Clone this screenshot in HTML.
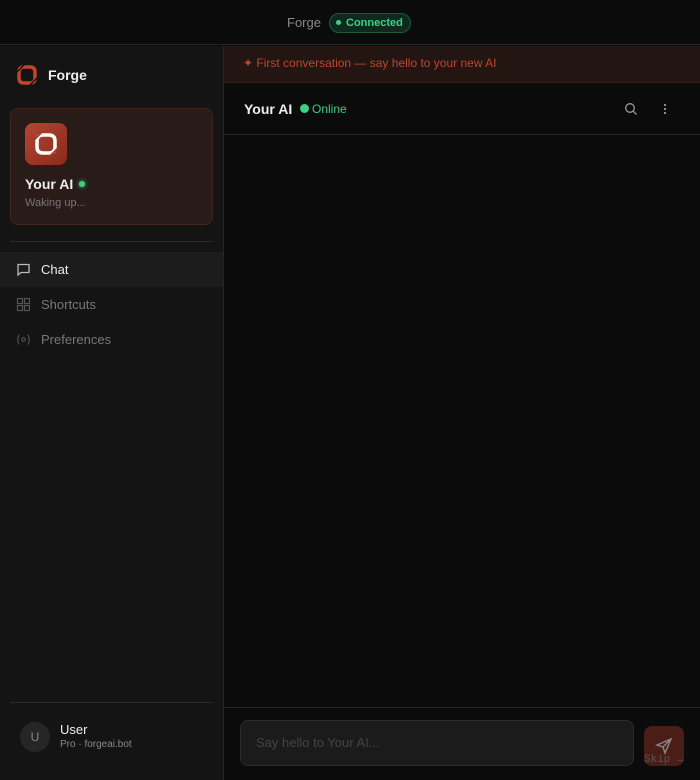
<!DOCTYPE html>
<html><head><style>
*{box-sizing:border-box;margin:0;padding:0}
body{width:700px;height:780px;background:#0b0b0b;font-family:"Liberation Sans",sans-serif;position:relative;overflow:hidden;color:#eee}
.top{position:absolute;left:0;top:0;width:700px;height:45px;background:#0b0b0b;border-bottom:1px solid #262626}
.side{position:absolute;left:0;top:46px;width:224px;height:734px;background:#141414;border-right:1px solid #262626}
.abs{position:absolute}
</style></head><body>
<div class="top">
 <span class="abs" style="left:287px;top:15px;font-size:13px;color:#8a8a8a">Forge</span>
 <div class="abs" style="left:329px;top:13px;width:82px;height:20px;border-radius:10px;background:#0f2a1c;border:1px solid #1d5a3a;font-size:11px;color:#3ecf85;line-height:18px;padding-left:16px;font-weight:bold">Connected<span class="abs" style="left:6px;top:6px;width:5px;height:5px;border-radius:50%;background:#3ecf85"></span></div>
</div>
<div class="side">
 <svg class="abs" style="left:16px;top:18px" width="22" height="22" viewBox="0 0 22 22"><path d="M3 8 Q3 3 8 3 L14 3 Q19 3 19 8 L19 14 Q19 19 14 19 L8 19 Q3 19 3 14Z" fill="none" stroke="#c2452c" stroke-width="3.5"/><path d="M9 0 L0 9 M13 22 L22 13" stroke="#141414" stroke-width="1.5"/></svg>
 <span class="abs" style="left:48px;top:21px;font-size:14px;font-weight:bold;color:#eee">Forge</span>
 <div class="abs" style="left:10px;top:62px;width:203px;height:117px;border-radius:8px;background:#281b18;border:1px solid #42241d"></div>
 <div class="abs" style="left:25px;top:77px;width:42px;height:42px;border-radius:8px;background:linear-gradient(135deg,#b44532,#8a2a1c)"></div>
 <svg class="abs" style="left:33px;top:85px" width="26" height="26" viewBox="0 0 26 26"><path d="M4 10 Q4 4 10 4 L16 4 Q22 4 22 10 L22 16 Q22 22 16 22 L10 22 Q4 22 4 16Z" fill="none" stroke="#fff" stroke-width="3.5"/><path d="M10 0 L0 10 M16 26 L26 16" stroke="#a33a28" stroke-width="1.8"/></svg>
 <span class="abs" style="left:25px;top:130px;font-size:14px;font-weight:bold;color:#eee">Your AI</span>
 <span class="abs" style="left:79px;top:135px;width:6px;height:6px;border-radius:50%;background:#3ecf85;box-shadow:0 0 4px #3ecf85"></span>
 <span class="abs" style="left:25px;top:151px;font-size:11px;color:#777">Waking up...</span>
 <div class="abs" style="left:10px;top:195px;width:203px;height:1px;background:#2a2a2a"></div>
 <div class="abs" style="left:0;top:206px;width:223px;height:35px;background:#1c1c1c"></div>
 <svg class="abs" style="left:16px;top:216px" width="15" height="15" viewBox="0 0 15 15" fill="none" stroke="#bbb" stroke-width="1.3"><path d="M2 2.5h11v8H5l-3 2.5z"/></svg>
 <span class="abs" style="left:41px;top:216px;font-size:13px;color:#eee">Chat</span>
 <svg class="abs" style="left:16px;top:251px" width="15" height="15" viewBox="0 0 15 15" fill="none" stroke="#555" stroke-width="1.2"><rect x="1.5" y="1.5" width="5" height="5"/><rect x="8.5" y="1.5" width="5" height="5"/><rect x="1.5" y="8.5" width="5" height="5"/><rect x="8.5" y="8.5" width="5" height="5"/></svg>
 <span class="abs" style="left:41px;top:251px;font-size:13px;color:#777">Shortcuts</span>
 <svg class="abs" style="left:16px;top:287px" width="15" height="13" viewBox="0 0 15 13" fill="none" stroke="#555" stroke-width="1.1"><path d="M3 1.5Q0.5 6.5 3 11.5M12 1.5Q14.5 6.5 12 11.5"/><circle cx="7.5" cy="6.5" r="1.8"/></svg>
 <span class="abs" style="left:41px;top:286px;font-size:13px;color:#777">Preferences</span>
 <div class="abs" style="left:10px;top:656px;width:203px;height:1px;background:#2a2a2a"></div>
 <div class="abs" style="left:20px;top:676px;width:30px;height:30px;border-radius:50%;background:#262626;color:#888;font-size:12px;text-align:center;line-height:30px">U</div>
 <span class="abs" style="left:60px;top:676px;font-size:13px;color:#eee">User</span>
 <span class="abs" style="left:60px;top:693px;font-size:10px;color:#888">Pro · forgeai.bot</span>
</div>
<div class="abs" style="left:224px;top:46px;width:476px;height:37px;background:#221512;border-bottom:1px solid #3a1d17;font-size:12px;color:#c2452c;padding:10px 0 0 19px">✦ First conversation — say hello to your new AI</div>
<div class="abs" style="left:224px;top:83px;width:476px;height:52px;border-bottom:1px solid #262626"></div>
<span class="abs" style="left:244px;top:101px;font-size:14px;font-weight:bold;color:#eee">Your AI</span>
<span class="abs" style="left:300px;top:104px;width:9px;height:9px;border-radius:50%;background:#3ecf85"></span>
<span class="abs" style="left:312px;top:102px;font-size:12px;color:#3ecf85">Online</span>
<svg class="abs" style="left:624px;top:102px" width="14" height="14" viewBox="0 0 14 14" fill="none" stroke="#999" stroke-width="1.3"><circle cx="6" cy="6" r="4.3"/><path d="M9.2 9.2L12.5 12.5"/></svg>
<svg class="abs" style="left:661px;top:102px" width="8" height="14" viewBox="0 0 8 14" fill="#999"><circle cx="4" cy="3" r="1.1"/><circle cx="4" cy="7" r="1.1"/><circle cx="4" cy="11" r="1.1"/></svg>
<div class="abs" style="left:224px;top:707px;width:476px;height:1px;background:#262626"></div>
<div class="abs" style="left:240px;top:720px;width:394px;height:46px;border-radius:8px;background:#1b1b1b;border:1px solid #2c2c2c;font-size:13px;color:#444;padding:14px 0 0 15px">Say hello to Your AI...</div>
<div class="abs" style="left:644px;top:726px;width:40px;height:40px;border-radius:8px;background:#4a1e16"></div>
<svg class="abs" style="left:655px;top:737px" width="18" height="18" viewBox="0 0 18 18" fill="none" stroke="#888" stroke-width="1.4"><path d="M16 2L2 8l6 2 2 6z M16 2L8 10"/></svg>
<span class="abs" style="left:644px;top:754px;font-size:11px;color:#555;font-family:'Liberation Mono',monospace">Skip →</span>
</body></html>
